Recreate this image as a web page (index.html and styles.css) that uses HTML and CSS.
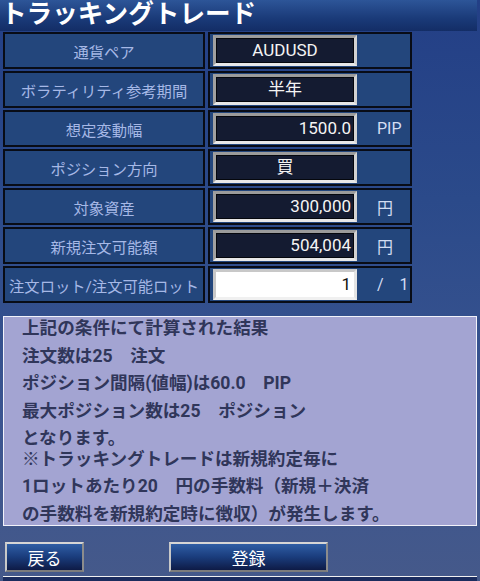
FILE: index.html
```html
<!DOCTYPE html>
<html lang="ja">
<head>
    <meta charset="UTF-8">
    <meta name="viewport" content="width=device-width, initial-scale=1.0">
    <title>トラッキングトレード</title>
    <link rel="stylesheet" href="styles.css">
</head>
<body>
    <div id="wrap">
        <h1 class="title">トラッキングトレード</h1>

        <!-- 注文条件 -->
        <div class="form">
            <div class="row">
                <div class="label">通貨ペア</div>
                <div class="value"><div class="field center">AUDUSD</div></div>
            </div>
            <div class="row">
                <div class="label">ボラティリティ参考期間</div>
                <div class="value"><div class="field center">半年</div></div>
            </div>
            <div class="row">
                <div class="label">想定変動幅</div>
                <div class="value"><div class="field">1500.0</div><span class="unit">PIP</span></div>
            </div>
            <div class="row">
                <div class="label">ポジション方向</div>
                <div class="value"><div class="field center">買</div></div>
            </div>
            <div class="row">
                <div class="label">対象資産</div>
                <div class="value"><div class="field">300,000</div><span class="unit">円</span></div>
            </div>
            <div class="row">
                <div class="label">新規注文可能額</div>
                <div class="value"><div class="field">504,004</div><span class="unit">円</span></div>
            </div>
            <div class="row">
                <div class="label">注文ロット/注文可能ロット</div>
                <div class="value"><div class="field input">1</div><span class="unit">/&nbsp;&nbsp;&nbsp;&nbsp;1</span></div>
            </div>
        </div>

        <!-- 計算結果 -->
        <div class="result">
            <p class="lines">
                上記の条件にて計算された結果<br>
                注文数は25　注文<br>
                ポジション間隔(値幅)は60.0　PIP<br>
                最大ポジション数は25　ポジション<br>
                となります。
            </p>
            <p class="lines note">
                ※トラッキングトレードは新規約定毎に<br>
                1ロットあたり20　円の手数料（新規＋決済<br>
                の手数料を新規約定時に徴収）が発生します。
            </p>
        </div>

        <div class="actions">
            <button class="btn back">戻る</button>
            <button class="btn submit">登録</button>
        </div>
        <div class="next-box"></div>
    </div>
</body>
</html>
```

FILE: styles.css
```css
*{
    margin: 0;
    padding: 0;
    box-sizing: border-box;
}
body{
    width: 480px;
    height: 581px;
    overflow: hidden;
    font-family: Roboto, "Noto Sans CJK JP", sans-serif;
    background: linear-gradient(#233f86 0px, #2b4a8a 200px, #3b5590 420px, #45598a 581px);
}
#wrap{
    width: 477px;
}
.title{
    height: 31px;
    padding-left: 1px;
    font-size: 25.6px;
    font-weight: bold;
    line-height: 28px;
    color: #fff;
    white-space: nowrap;
    overflow: hidden;
    background: linear-gradient(#2d5598, #1a3a78 60%, #132d66);
}

/* 入力テーブル */
.form{
    display: flex;
    flex-direction: column;
    gap: 2px;
    margin: 1px 0 0 3px;
}
.row{
    display: flex;
    gap: 3px;
    height: 37px;
}
.label{
    width: 202px;
    display: flex;
    align-items: center;
    justify-content: center;
    background-color: #23467c;
    border: 2px solid #080c16;
    color: #a6b8e6;
    font-size: 15.3px;
    white-space: nowrap;
}
.value{
    width: 204px;
    display: flex;
    align-items: center;
    padding-left: 3px;
    background-color: #23467c;
    border: 2px solid #080c16;
}
.field{
    width: 144px;
    height: 31px;
    padding-right: 3px;
    border: 3px solid;
    border-color: #9b9b9b #d2d2d2 #e8e8e8 #a0a0a0;
    box-shadow: inset 0 0 0 1px #05070d;
    background-color: #141b31;
    color: #f4f4f4;
    font-size: 17px;
    line-height: 25px;
    text-align: right;
}
.field.center{
    text-align: center;
    padding-right: 0;
}
.field.input{
    background-color: #fff;
    color: #111;
    border-color: #c8c8c8 #e4e4e4 #f0f0f0 #c8c8c8;
    box-shadow: none;
}
.unit{
    margin-left: 20px;
    color: #d3ddf3;
    font-size: 16px;
    white-space: nowrap;
}

/* 結果エリア */
.result{
    height: 210px;
    margin: 13px 0 0 3px;
    padding-left: 18px;
    overflow: hidden;
    background-color: #a3a4d2;
    border: 1px solid #f2f2fa;
    color: #30365a;
    font-size: 17.6px;
    font-weight: bold;
}
.lines{
    line-height: 27.6px;
    margin-top: -2px;
    white-space: nowrap;
}
.lines.note{
    line-height: 27.5px;
    margin-top: -7px;
}

/* ボタン */
.actions{
    display: flex;
    gap: 85px;
    margin: 16px 0 0 5px;
}
.btn{
    height: 30px;
    border: 2px solid;
    border-color: #d6d6d6 #8c8c8c #7c7c7c #c8c8c8;
    background: linear-gradient(#2f5ea5, #1a3c7c 50%, #0e1b46);
    color: #fff;
    font-family: Roboto, "Noto Sans CJK JP", sans-serif;
    font-size: 17px;
}
.btn.back{
    width: 79px;
}
.btn.submit{
    width: 159px;
}
.next-box{
    height: 20px;
    margin: 4px 0 0 3px;
    border-top: 1px solid #f0f0f0;
    background-color: #1b2c5e;
}
```
